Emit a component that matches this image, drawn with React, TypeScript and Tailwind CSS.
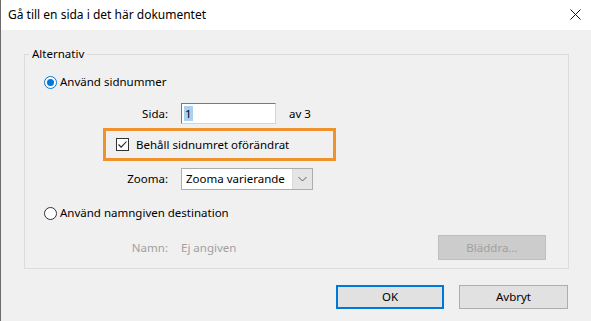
export default function App() {
  return (
    <div
      className="w-[591px] h-[321px] flex flex-col border-l border-[#6b6b6b] bg-[#f0f0f0] text-[11.5px] text-black overflow-hidden"
      style={{ fontFamily: '"Segoe UI", "Noto Sans", sans-serif' }}
    >
      {/* Title bar */}
      <div className="h-[30px] bg-white flex items-center justify-between pl-[7px] pr-[10px] shrink-0">
        <span className="text-[12px] leading-none">Gå till en sida i det här dokumentet</span>
        <svg width="11" height="11" viewBox="0 0 11 11" className="mb-[2px]">
          <path d="M0.5 0.5 L10.5 10.5 M10.5 0.5 L0.5 10.5" stroke="#111" strokeWidth="1" />
        </svg>
      </div>

      {/* Body */}
      <div className="flex-1 flex flex-col pl-[23px] pr-[22px]">
        <fieldset className="mt-[16px] border border-[#dcdcdc] pb-[8px]">
          <legend className="ml-[4px] px-[3px] leading-[16px]">Alternativ</legend>

          {/* Radio 1 */}
          <div className="mt-[12px] h-[16px] flex items-center pl-[19px]">
            <span className="w-[13px] h-[13px] rounded-full border border-[#0078d7] bg-white flex items-center justify-center">
              <span className="w-[7px] h-[7px] rounded-full bg-[#0078d7]" />
            </span>
            <span className="ml-[3px]">Använd sidnummer</span>
          </div>

          {/* Sida */}
          <div className="mt-[13px] h-[21px] flex items-center">
            <span className="w-[143px] text-right">Sida:</span>
            <div className="ml-[13px] w-[95px] h-[21px] bg-white border border-[#7a7a7a] border-r-[#d4d4d4] border-b-[#d4d4d4] flex items-center pl-[2px]">
              <span className="bg-[#a9d1f2] leading-[15px] px-[1px]">1</span>
            </div>
            <span className="ml-[13px]">av 3</span>
          </div>

          {/* Checkbox highlighted */}
          <div className="mt-[4px] ml-[78px] w-[233px] h-[33px] border-[3px] border-[#f0922b] flex items-center pl-[10px]">
            <span className="w-[13px] h-[13px] border border-[#333] bg-white flex items-center justify-center">
              <svg width="11" height="11" viewBox="0 0 11 11">
                <path d="M1.5 5.5 L4.2 8.2 L9.5 2.5" fill="none" stroke="#222" strokeWidth="1.1" />
              </svg>
            </span>
            <span className="ml-[7px]">Behåll sidnumret oförändrat</span>
          </div>

          {/* Zooma */}
          <div className="mt-[7px] h-[22px] flex items-center">
            <span className="w-[143px] text-right">Zooma:</span>
            <div className="ml-[13px] w-[132px] h-[22px] border border-[#adadad] bg-white flex">
              <div className="flex-1 flex items-center pl-[4px]">
                <span>Zooma varierande</span>
              </div>
              <div className="w-[20px] bg-[#e5e5e5] border-l border-[#d9d9d9] flex items-center justify-center">
                <svg width="9" height="6" viewBox="0 0 9 6">
                  <path d="M0.5 1 L4.5 5 L8.5 1" fill="none" stroke="#606060" strokeWidth="1" />
                </svg>
              </div>
            </div>
          </div>

          {/* Radio 2 */}
          <div className="mt-[15px] h-[16px] flex items-center pl-[19px]">
            <span className="w-[13px] h-[13px] rounded-full border border-[#333] bg-white" />
            <span className="ml-[3px]">Använd namngiven destination</span>
          </div>

          {/* Namn */}
          <div className="mt-[14px] h-[25px] flex items-center text-[#a0a0a0]">
            <span className="w-[143px] text-right">Namn:</span>
            <span className="ml-[13px]">Ej angiven</span>
            <div className="ml-auto mr-[22px] w-[108px] h-[25px] bg-[#cccccc] border border-[#bfbfbf] flex items-center justify-center">
              Bläddra...
            </div>
          </div>
        </fieldset>

        {/* Buttons */}
        <div className="mt-[16px] flex justify-end gap-[15px] pr-[1px]">
          <button className="w-[108px] h-[24px] bg-[#e1e1e1] border-2 border-[#0078d7] flex items-center justify-center">
            OK
          </button>
          <button className="w-[109px] h-[24px] bg-[#e1e1e1] border border-[#adadad] flex items-center justify-center">
            Avbryt
          </button>
        </div>
      </div>
    </div>
  );
}
